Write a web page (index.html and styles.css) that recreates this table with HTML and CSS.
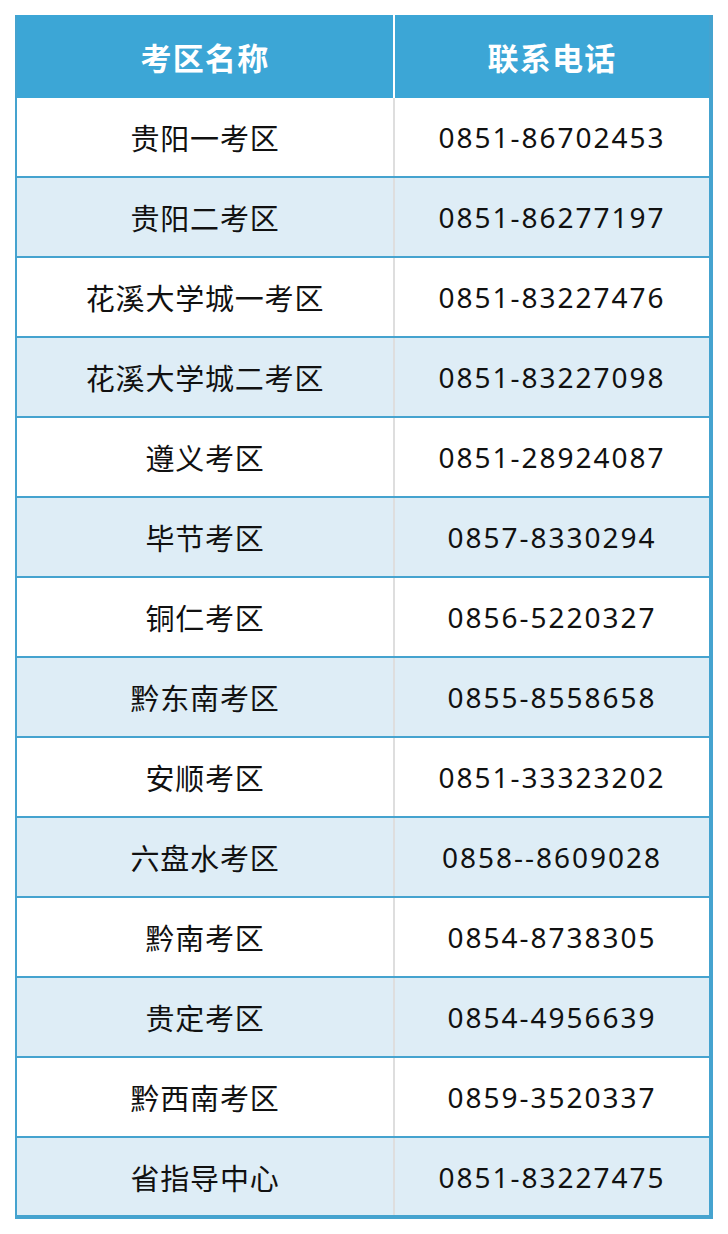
FILE: index.html
```html
<!DOCTYPE html>
<html lang="zh">
<head>
<meta charset="utf-8">
<link rel="stylesheet" href="styles.css">
</head>
<body>
<div class="tbl">
  <div class="row head"><div class="c name">考区名称</div><div class="c tel">联系电话</div></div>
  <div class="row"><div class="c name">贵阳一考区</div><div class="c tel">0851-86702453</div></div>
  <div class="row alt"><div class="c name">贵阳二考区</div><div class="c tel">0851-86277197</div></div>
  <div class="row"><div class="c name">花溪大学城一考区</div><div class="c tel">0851-83227476</div></div>
  <div class="row alt"><div class="c name">花溪大学城二考区</div><div class="c tel">0851-83227098</div></div>
  <div class="row"><div class="c name">遵义考区</div><div class="c tel">0851-28924087</div></div>
  <div class="row alt"><div class="c name">毕节考区</div><div class="c tel">0857-8330294</div></div>
  <div class="row"><div class="c name">铜仁考区</div><div class="c tel">0856-5220327</div></div>
  <div class="row alt"><div class="c name">黔东南考区</div><div class="c tel">0855-8558658</div></div>
  <div class="row"><div class="c name">安顺考区</div><div class="c tel">0851-33323202</div></div>
  <div class="row alt"><div class="c name">六盘水考区</div><div class="c tel">0858--8609028</div></div>
  <div class="row"><div class="c name">黔南考区</div><div class="c tel">0854-8738305</div></div>
  <div class="row alt"><div class="c name">贵定考区</div><div class="c tel">0854-4956639</div></div>
  <div class="row"><div class="c name">黔西南考区</div><div class="c tel">0859-3520337</div></div>
  <div class="row alt last"><div class="c name">省指导中心</div><div class="c tel">0851-83227475</div></div>
</div>
</body>
</html>
```
FILE: styles.css
```css
html, body { margin: 0; padding: 0; background: #fff; }
body { padding: 15px 0 0 15px; font-family: "Noto Sans", "Noto Sans CJK SC", sans-serif; color: #111; }
.tbl {
  width: 692px;
  border-left: 2px solid #45a3cf;
  border-right: 4px solid #45a3cf;
  border-bottom: 4px solid #45a3cf;
}
.row {
  display: flex;
  height: 78px;
  border-bottom: 2px solid #45a3cf;
  background: #fff;
}
.row.alt { background: #deedf6; }
.row.last { border-bottom: none; height: 77px; }
.row.head {
  height: 83px;
  border-bottom: none;
  background: #3ca6d6;
  color: #fff;
}
.c {
  display: flex;
  align-items: center;
  justify-content: center;
}
.name {
  width: 376px;
  border-right: 2px solid #dedede;
  font-family: "Noto Sans CJK SC", sans-serif;
  font-size: 29px;
  letter-spacing: 0.8px;
}
.tel {
  flex: 1;
  font-size: 28px;
  letter-spacing: 2px;
}
.head .name, .head .tel {
  font-family: "Noto Sans CJK SC", sans-serif;
  font-weight: 700;
  font-size: 31px;
  letter-spacing: 1.3px;
  border-right-color: #fff;
}
.head .tel { border-right: none; }
```
